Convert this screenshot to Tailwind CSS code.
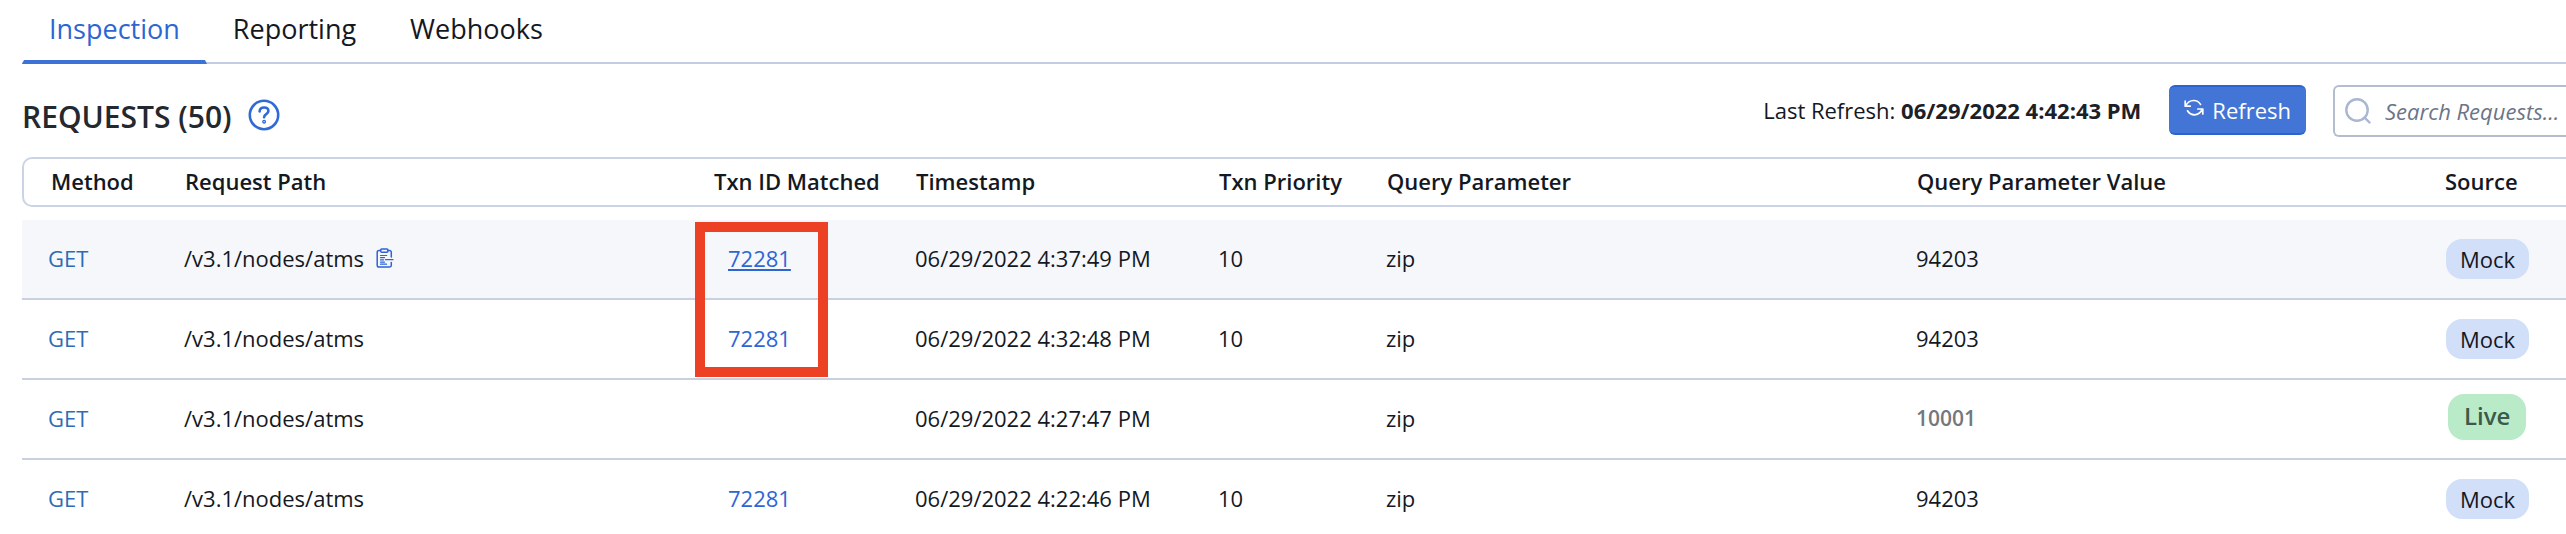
<!DOCTYPE html>
<html lang="en">
<head>
<meta charset="utf-8">
<title>Requests</title>
<script src="https://cdn.jsdelivr.net/npm/@tailwindcss/browser@4"></script>
</head>
<body class="bg-white font-['Open_Sans',sans-serif] text-[22px] leading-8 text-[#14181f] overflow-hidden">
<nav class="ml-[22px] flex border-b-2 border-[#c3cce0] text-[27px]" aria-label="Sections">
  <a href="#" aria-current="page" class="-mb-[2px] h-16 border-x-2 border-b-4 border-x-transparent border-b-[#3d71d6] px-[25px] pt-[13px] text-[#2d66d2]">Inspection</a>
  <a href="#" class="px-[26px] pt-[13px]">Reporting</a>
  <a href="#" class="px-[28px] pt-[13px]">Webhooks</a>
</nav>
<main class="ml-[22px]">
  <header class="flex h-[93px] items-start justify-between pt-[21px]">
    <div class="flex items-center gap-4 pt-[14px]">
      <h1 class="text-[30px] font-semibold leading-9 text-[#24282f]">REQUESTS (50)</h1>
      <button type="button" aria-label="Help" class="-mt-[5px]">
        <svg class="size-8" viewBox="0 0 32 32" fill="none" stroke="#2f6ad6" stroke-width="2.6" stroke-linecap="round" stroke-linejoin="round"><circle cx="16" cy="16" r="14.2"/><path d="M11.6 12.4c.2-2.500 2-3.900 4.500-3.900 2.600 0 4.300 1.500 4.300 3.600 0 3.300-4.300 2.900-4.300 6.200"/><circle cx="16.100" cy="22.700" r="0.700"/></svg>
      </button>
    </div>
    <div class="flex items-start">
      <p class="mr-7 pt-[9px]">Last Refresh: <b class="font-bold text-[#1c2027]">06/29/2022 4:42:43 PM</b></p>
      <button type="button" class="mr-[27px] flex h-[50px] items-center gap-2 rounded-md border-y-2 border-[#2c63d0] bg-[#4275d5] px-[15px] text-white">
        <svg class="mb-1 size-5" viewBox="0 0 20 20" fill="none" stroke="currentColor" stroke-width="1.700" stroke-linecap="round" stroke-linejoin="round"><path d="M1.200 3.200v5h5M1.700 8C3.200 4.600 6.200 2.500 9.600 2.500c3 0 5.400 1.400 6.900 3.900M18.800 16v-5h-5M18.300 11.200c-1.500 3.500-4.400 5.600-7.900 5.600-3 0-5.400-1.500-6.900-4"/></svg>
        Refresh
      </button>
      <label class="flex h-[52px] w-[233px] items-center gap-[14px] rounded-l-md border-2 border-r-0 border-[#b4bdd0] pl-[10px]">
        <svg class="size-[26px] shrink-0" viewBox="0 0 26 26" fill="none" stroke="#aab7d0" stroke-width="2.400" stroke-linecap="round"><circle cx="12" cy="12" r="10.700"/><path d="M19.500 19.500l5 5"/></svg>
        <input type="text" aria-label="Search requests" placeholder="Search Requests..." class="min-w-0 flex-1 italic outline-none placeholder:text-[#6b7588]">
      </label>
    </div>
  </header>
  <div class="relative">
    <table class="w-full table-fixed border-separate border-spacing-0 text-left">
      <colgroup><col class="w-[134px]"><col class="w-[529px]"><col class="w-[202px]"><col class="w-[303px]"><col class="w-[168px]"><col class="w-[530px]"><col class="w-[528px]"><col></colgroup>
      <thead class="whitespace-nowrap [&_th]:h-[50px] [&_th]:border-y-2 [&_th]:border-[#cbd3e6] [&_th]:p-0 [&_th]:pb-[2px] [&_th]:font-semibold">
        <tr>
          <th scope="col" class="rounded-l-[10px] border-l-2"><span class="pl-[27px]">Method</span></th>
          <th scope="col"><span class="pl-[29px]">Request Path</span></th>
          <th scope="col"><span class="pl-[29px]">Txn ID Matched</span></th>
          <th scope="col"><span class="pl-[29px]">Timestamp</span></th>
          <th scope="col"><span class="pl-[29px]">Txn Priority</span></th>
          <th scope="col"><span class="pl-[29px]">Query Parameter</span></th>
          <th scope="col"><span class="pl-[29px]">Query Parameter Value</span></th>
          <th scope="col"><span class="pl-[29px]">Source</span></th>
        </tr>
      </thead>
      <tbody class="whitespace-nowrap before:block before:h-[13px] before:content-[''] [&_td]:h-20 [&_td]:border-b-2 [&_td]:border-[#c9d1e0] [&_td]:pt-0 [&_td]:pr-0 [&_td]:pb-[2px] [&_td]:pl-[28px] [&_td:first-child]:pl-[26px] [&_td:last-child]:pb-0">
        <tr class="bg-[#f5f7fb]">
          <td class="text-[#2d6cb5]">GET</td>
          <td><div class="flex items-center gap-3">/v3.1/nodes/atms
            <button type="button" aria-label="Copy path"><svg class="h-5 w-[18px]" viewBox="0 0 18 20" fill="none" stroke="#2f63d6" stroke-width="1.500" stroke-linecap="round" stroke-linejoin="round"><path d="M4.500 2.500H3A1.800 1.800 0 0 0 1.200 4.300v12.900A1.800 1.800 0 0 0 3 19h10.500a1.800 1.800 0 0 0 1.800-1.800V14.500M15.300 9V4.300a1.800 1.800 0 0 0-1.800-1.800H12"/><rect x="4.700" y="1" width="7.200" height="3.300" rx="1"/><path stroke-width="1.200" d="M4.500 7.500h6.200M4.500 9.700h4M4.500 11.900h3M4.500 14.100h4M4.500 16.200h6M9.500 11.700h7.500"/></svg></button></div></td>
          <td><a href="#" class="ml-[15px] text-[#2d66d2] underline decoration-2 underline-offset-2">72281</a></td>
          <td>06/29/2022 4:37:49 PM</td><td>10</td><td>zip</td><td>94203</td>
          <td><span class="ml-[2px] inline-block rounded-2xl bg-[#d1dff9] px-[14px] py-1">Mock</span></td>
        </tr>
        <tr>
          <td class="text-[#2d6cb5]">GET</td><td>/v3.1/nodes/atms</td>
          <td><a href="#" class="ml-[15px] text-[#2d66d2]">72281</a></td>
          <td>06/29/2022 4:32:48 PM</td><td>10</td><td>zip</td><td>94203</td>
          <td><span class="ml-[2px] inline-block rounded-2xl bg-[#d1dff9] px-[14px] py-1">Mock</span></td>
        </tr>
        <tr>
          <td class="text-[#2d6cb5]">GET</td><td>/v3.1/nodes/atms</td><td></td>
          <td>06/29/2022 4:27:47 PM</td><td></td><td>zip</td><td class="text-[21px] font-semibold text-[#74777d]">10001</td>
          <td><span class="mb-1 ml-1 inline-block rounded-2xl bg-[#b9ebc8] px-4 pt-[6px] pb-2 text-[24px] font-semibold text-[#3b5a4b]">Live</span></td>
        </tr>
        <tr>
          <td class="text-[#2d6cb5]">GET</td><td>/v3.1/nodes/atms</td>
          <td><a href="#" class="ml-[15px] text-[#2d66d2]">72281</a></td>
          <td>06/29/2022 4:22:46 PM</td><td>10</td><td>zip</td><td>94203</td>
          <td><span class="ml-[2px] inline-block rounded-2xl bg-[#d1dff9] px-[14px] py-1">Mock</span></td>
        </tr>
      </tbody>
    </table>
    <div class="pointer-events-none absolute top-[65px] left-[673px] h-[155px] w-[133px] border-10 border-[#ec4125]"></div>
  </div>
</main>
</body>
</html>
